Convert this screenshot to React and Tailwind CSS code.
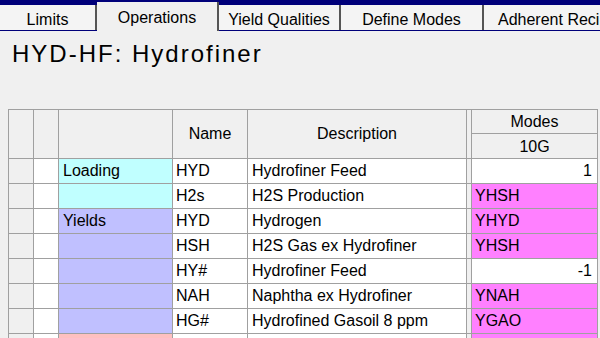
import React from "react";

const F = { fontFamily: '"Liberation Sans", Arial, sans-serif' };

const rows = [
  { cat: "Loading", catBg: "bg-[#c0ffff]", name: "HYD", desc: "Hydrofiner Feed", mode: "1", num: true },
  { cat: "", catBg: "bg-[#c0ffff]", name: "H2s", desc: "H2S Production", mode: "YHSH" },
  { cat: "Yields", catBg: "bg-[#c0c0ff]", name: "HYD", desc: "Hydrogen", mode: "YHYD" },
  { cat: "", catBg: "bg-[#c0c0ff]", name: "HSH", desc: "H2S Gas ex Hydrofiner", mode: "YHSH" },
  { cat: "", catBg: "bg-[#c0c0ff]", name: "HY#", desc: "Hydrofiner Feed", mode: "-1", num: true },
  { cat: "", catBg: "bg-[#c0c0ff]", name: "NAH", desc: "Naphtha ex Hydrofiner", mode: "YNAH" },
  { cat: "", catBg: "bg-[#c0c0ff]", name: "HG#", desc: "Hydrofined Gasoil 8 ppm", mode: "YGAO" },
  { cat: "Products", catBg: "bg-[#ffc0c0]", name: "HGH", desc: "Hydrotreated Gasoil 8", mode: "GH8" },
];

function Tab({ label, active, w, pad }) {
  if (active) {
    return (
      <div
        className={`${w} shrink-0 h-[29px] self-end bg-[#f0f0f0] border-r-2 border-[#555] flex items-center justify-center pt-[3px] text-[16px] text-black`}
      >
        {label}
      </div>
    );
  }
  return (
    <div
      className={`${w} shrink-0 h-[25px] self-end mb-[1px] bg-[#f4f4f4] border-r-2 border-[#555] flex items-center ${pad || "justify-center"} pt-[4px] text-[16px] text-black whitespace-nowrap overflow-hidden`}
    >
      {label}
    </div>
  );
}

export default function App() {
  const cell = "border-r border-b border-[#a0a0a0]";
  return (
    <div className="w-[600px] h-[338px] overflow-hidden bg-[#f0f0f0] text-black" style={F}>
      {/* tab strip */}
      <div className="h-[31px] bg-[#00007a] flex items-end overflow-hidden">
        <Tab label="Limits" w="w-[97px]" />
        <Tab label="Operations" active w="w-[122px]" />
        <Tab label="Yield Qualities" w="w-[122px]" />
        <Tab label="Define Modes" w="w-[143px]" />
        <Tab label="Adherent Recipes" w="w-[140px]" pad="justify-start pl-[14px]" />
      </div>

      {/* heading */}
      <div className="mt-[9px] pl-[12px] h-[28px] leading-[28px] text-[24px] tracking-[2px]">
        HYD-HF: Hydrofiner
      </div>

      {/* grid table */}
      <div className="mt-[41px] ml-[8px] w-[590px] border-l border-t border-[#a0a0a0] grid grid-cols-[25px_25px_114px_75px_219px_5px_126px] grid-rows-[24px_25px] auto-rows-[25px] text-[16px] leading-[24px]">
        <div className={`${cell} row-span-2 bg-[#f0f0f0]`} />
        <div className={`${cell} row-span-2 bg-[#f0f0f0]`} />
        <div className={`${cell} row-span-2 bg-[#f0f0f0]`} />
        <div className={`${cell} row-span-2 bg-[#f0f0f0] flex items-center justify-center`}>Name</div>
        <div className={`${cell} row-span-2 bg-[#f0f0f0] flex items-center justify-center`}>Description</div>
        <div className={`${cell} row-span-2 bg-[#f0f0f0]`} />
        <div className={`${cell} bg-[#f0f0f0] text-center`}>Modes</div>
        <div className={`${cell} bg-[#f0f0f0] text-center leading-[26px]`}>10G</div>

        {rows.map((r, i) => (
          <React.Fragment key={i}>
            <div className={`${cell} bg-[#f0f0f0]`} />
            <div className={`${cell} bg-white`} />
            <div className={`${cell} ${r.catBg} pl-[4px] whitespace-nowrap overflow-hidden`}>{r.cat}</div>
            <div className={`${cell} bg-white pl-[3px] whitespace-nowrap overflow-hidden`}>{r.name}</div>
            <div className={`${cell} bg-white pl-[4px] whitespace-nowrap overflow-hidden`}>{r.desc}</div>
            <div className={`${cell} bg-[#f0f0f0]`} />
            {r.num ? (
              <div className={`${cell} bg-white text-right pr-[5px]`}>{r.mode}</div>
            ) : (
              <div className={`${cell} bg-[#ff80ff] pl-[3px]`}>{r.mode}</div>
            )}
          </React.Fragment>
        ))}
      </div>
    </div>
  );
}
